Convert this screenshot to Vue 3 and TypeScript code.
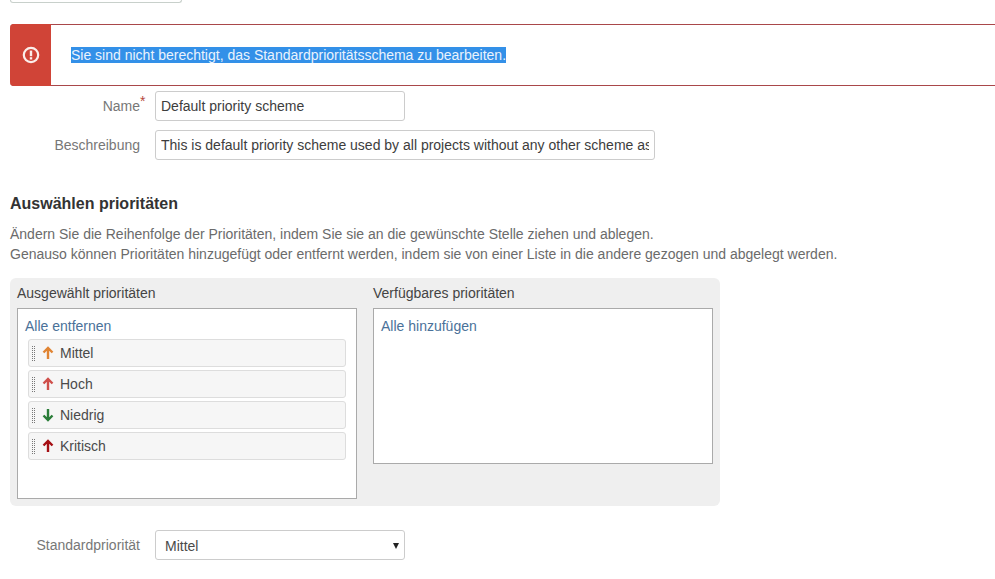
<script setup lang="ts">
// Priority scheme edit form, read only notice on top
interface Priority {
  name: string
  color: string
  down?: boolean
}

const priorities: Priority[] = [
  { name: 'Mittel', color: '#e08433' },
  { name: 'Hoch', color: '#cf4f4a' },
  { name: 'Niedrig', color: '#2a7d38', down: true },
  { name: 'Kritisch', color: '#a50f14' }
]
</script>

<template>
  <div class="page">
    <div class="stub"></div>

    <div class="alert">
      <div class="alert-icon">
        <svg width="18" height="18" viewBox="0 0 18 18" aria-hidden="true">
          <circle cx="9" cy="9" r="7.2" fill="none" stroke="#fbeeea" stroke-width="2.2" />
          <rect x="7.8" y="4.6" width="2.4" height="5.6" fill="#fbeeea" />
          <rect x="7.8" y="11.2" width="2.4" height="2.3" fill="#fbeeea" />
        </svg>
      </div>
      <div class="alert-text">
        <span class="selected">Sie sind nicht berechtigt, das Standardprioritätsschema zu bearbeiten.</span>
      </div>
    </div>

    <div class="row row-name">
      <label class="label">Name<sup class="req">*</sup></label>
      <input class="input short" type="text" value="Default priority scheme" />
    </div>
    <div class="row row-desc">
      <label class="label">Beschreibung</label>
      <input
        class="input long"
        type="text"
        value="This is default priority scheme used by all projects without any other scheme assigned"
      />
    </div>

    <h3 class="heading">Auswählen prioritäten</h3>
    <p class="help">
      Ändern Sie die Reihenfolge der Prioritäten, indem Sie sie an die gewünschte Stelle ziehen und ablegen.<br />
      Genauso können Prioritäten hinzugefügt oder entfernt werden, indem sie von einer Liste in die andere gezogen und abgelegt werden.
    </p>

    <div class="lists">
      <div class="col">
        <div class="col-title">Ausgewählt prioritäten</div>
        <div class="box box-selected">
          <a class="link">Alle entfernen</a>
          <ul class="items">
            <li v-for="p in priorities" :key="p.name" class="item">
              <span class="grip"></span>
              <svg class="arrow" width="12" height="14" viewBox="0 0 12 14" aria-hidden="true">
                <path
                  :d="p.down ? 'M6 1v11M1.5 7.5 6 12l4.5-4.5' : 'M6 13V2M1.5 6.5 6 2l4.5 4.5'"
                  fill="none"
                  :stroke="p.color"
                  stroke-width="2.4"
                />
              </svg>
              <span>{{ p.name }}</span>
            </li>
          </ul>
        </div>
      </div>
      <div class="col">
        <div class="col-title">Verfügbares prioritäten</div>
        <div class="box box-available">
          <a class="link">Alle hinzufügen</a>
        </div>
      </div>
    </div>

    <div class="row row-default">
      <label class="label">Standardpriorität</label>
      <div class="select">Mittel</div>
    </div>
  </div>
</template>

<style scoped>
.page {
  padding-left: 10px;
  font-family: "Liberation Sans", Arial, sans-serif;
  font-size: 14px;
  line-height: 20px;
  color: #333;
}

.stub {
  width: 172px;
  height: 3px;
  box-sizing: border-box;
  border: 1px solid #c8d0cb;
  border-top: 0;
  border-radius: 0 0 3px 3px;
}

.alert {
  display: flex;
  height: 62px;
  margin-top: 21px;
  box-sizing: border-box;
  border: 1px solid #a9474a;
  border-left: 0;
  border-right: 0;
  border-radius: 4px 0 0 4px;
}

.alert-icon {
  width: 41px;
  margin: -1px 0;
  display: flex;
  align-items: center;
  justify-content: center;
  background: #d04437;
  border-radius: 4px 0 0 4px;
}

.alert-text {
  display: flex;
  align-items: center;
  padding-left: 20px;
}

.selected {
  background: #3390e8;
  color: #eaf3fd;
  line-height: 16px;
}

.row {
  display: flex;
  align-items: center;
}

.row-name {
  margin-top: 5px;
}

.row-desc {
  margin-top: 9px;
}

.label {
  position: relative;
  width: 130px;
  margin-right: 15px;
  text-align: right;
  color: #777;
  white-space: nowrap;
}

/* hangs past the label edge so the name stays right aligned */
.req {
  position: absolute;
  left: 100%;
  top: -5px;
  color: #b5493c;
  font-size: 14px;
  line-height: 20px;
}

.input {
  height: 30px;
  padding: 0 5px;
  box-sizing: border-box;
  border: 1px solid #ccc;
  border-radius: 3px;
  font: inherit;
  color: #3d3d3d;
  background: #fff;
  outline: none;
}

.short {
  width: 250px;
}

.long {
  width: 500px;
}

.heading {
  margin: 35px 0 0;
  font-size: 16px;
  line-height: 18px;
  font-weight: 700;
}

.help {
  margin: 11px 0 0;
  color: #6b6b6b;
}

.lists {
  display: flex;
  gap: 16px;
  width: 710px;
  height: 228px;
  margin-top: 14px;
  padding: 7px;
  box-sizing: border-box;
  background: #efefef;
  border-radius: 6px;
}

.col {
  width: 340px;
}

.col-title {
  height: 23px;
  line-height: 17px;
  color: #444;
}

.box {
  box-sizing: border-box;
  border: 1px solid #aaa;
  background: #fff;
  padding: 7px;
}

.box-selected {
  height: 191px;
}

.box-available {
  height: 156px;
}

.link {
  display: block;
  color: #4a7199;
  line-height: 20px;
}

.items {
  list-style: none;
  margin: 3px 0 0 3px;
  padding: 0;
}

.item {
  display: flex;
  align-items: center;
  width: 318px;
  height: 28px;
  margin-bottom: 3px;
  box-sizing: border-box;
  padding-left: 3px;
  color: #4a4a4a;
  background: #f6f6f6;
  border: 1px solid #ddd;
  border-radius: 3px;
}

/* dotted drag handle: rows over columns give a 2px dot grid */
.grip {
  width: 4px;
  height: 16px;
  margin: -1px 6px 0 0;
  background:
    repeating-linear-gradient(to bottom, #f6f6f6 0 1px, transparent 1px 2px),
    repeating-linear-gradient(to right, #777 0 1px, transparent 1px 2px);
}

.arrow {
  margin-right: 6px;
}

.row-default {
  margin-top: 24px;
}

.select {
  position: relative;
  width: 250px;
  height: 30px;
  padding: 1px 9px 0;
  box-sizing: border-box;
  border: 1px solid #ccc;
  border-radius: 3px;
  line-height: 28px;
  color: #4a4a4a;
}

/* native looking arrow */
.select::after {
  content: "";
  position: absolute;
  right: 5px;
  top: 12px;
  border-left: 3px solid transparent;
  border-right: 3px solid transparent;
  border-top: 6px solid #222;
}
</style>

<style>
body {
  background: #fff;
}
</style>
